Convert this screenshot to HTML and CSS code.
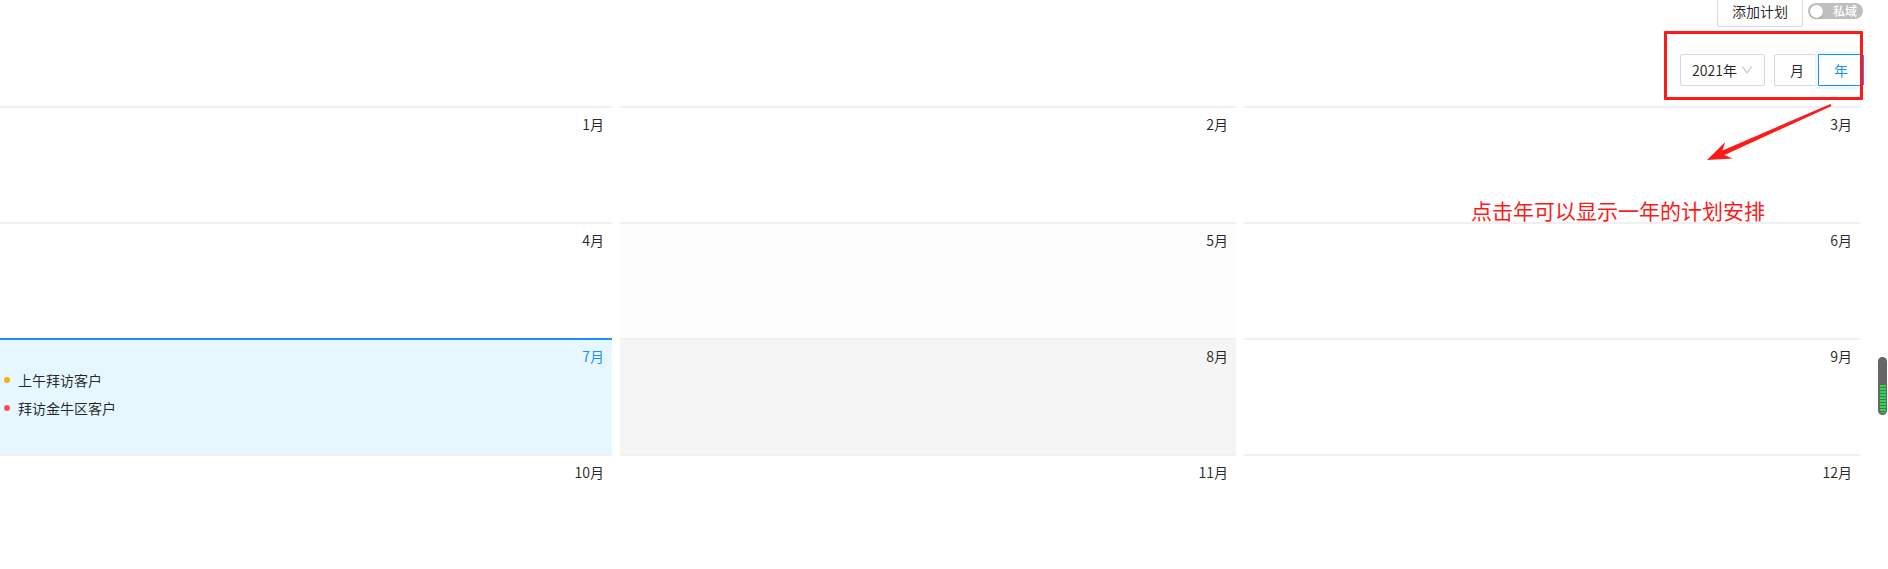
FILE: index.html
```html
<!DOCTYPE html>
<html lang="zh-CN">
<head>
<meta charset="utf-8">
<title>计划日历</title>
<link rel="stylesheet" href="styles.css">
</head>
<body>
<div class="page">
  <div class="toolbar">
    <button class="btn">添加计划</button>
    <div class="switch"><span class="switch-handle"></span><span class="switch-inner">私域</span></div>
  </div>
  <div class="controls">
    <div class="select">
      <span class="select-value">2021年</span>
      <svg class="select-arrow" viewBox="64 64 896 896" width="12" height="12"><path fill="currentColor" d="M884 256h-75c-5.1 0-9.900 2.5-12.9 6.6L512 654.2 227.9 262.6c-3-4.1-7.8-6.6-12.9-6.6h-75c-6.5 0-10.3 7.4-6.5 12.7l352.6 486.1c12.8 17.6 39 17.6 51.7 0l352.6-486.1c3.9-5.3.1-12.7-6.4-12.7z"/></svg>
    </div>
    <div class="radio-group">
      <span class="radio-btn">月</span>
      <span class="radio-btn checked">年</span>
    </div>
  </div>
  <div class="calendar">
    <div class="cell"><div class="cell-value">1月</div><div class="cell-content"></div></div>
    <div class="cell"><div class="cell-value">2月</div><div class="cell-content"></div></div>
    <div class="cell"><div class="cell-value">3月</div><div class="cell-content"></div></div>
    <div class="cell"><div class="cell-value">4月</div><div class="cell-content"></div></div>
    <div class="cell cell-fading"><div class="cell-value">5月</div><div class="cell-content"></div></div>
    <div class="cell"><div class="cell-value">6月</div><div class="cell-content"></div></div>
    <div class="cell cell-today">
      <div class="cell-value">7月</div>
      <div class="cell-content">
        <ul class="events">
          <li class="event"><span class="dot dot-warning"></span><span class="event-text">上午拜访客户</span></li>
          <li class="event"><span class="dot dot-error"></span><span class="event-text">拜访金牛区客户</span></li>
        </ul>
      </div>
    </div>
    <div class="cell cell-hover"><div class="cell-value">8月</div><div class="cell-content"></div></div>
    <div class="cell"><div class="cell-value">9月</div><div class="cell-content"></div></div>
    <div class="cell"><div class="cell-value">10月</div><div class="cell-content"></div></div>
    <div class="cell"><div class="cell-value">11月</div><div class="cell-content"></div></div>
    <div class="cell"><div class="cell-value">12月</div><div class="cell-content"></div></div>
  </div>
</div>

<div class="annot-box"></div>
<svg class="annot-arrow" width="140" height="70" viewBox="0 0 140 70">
  <polygon fill="#ff1a1a" points="7,60 32.6,58.5 24.5,55 131.6,6 130.4,4 22.5,50.4 25.2,42.1"/>
</svg>
<div class="annot-text">点击年可以显示一年的计划安排</div>
<div class="scroll-thumb"><div class="scroll-green"></div></div>
</body>
</html>
```

FILE: styles.css
```css
* { box-sizing: border-box; }
html, body {
  margin: 0;
  padding: 0;
  background: #fff;
  overflow: hidden;
}
body {
  font-family: "Noto Sans CJK SC", "Noto Sans", sans-serif;
  font-size: 14px;
  color: rgba(0, 0, 0, 0.85);
  width: 1888px;
  height: 569px;
  position: relative;
}
.page {
  width: 1864px;
  display: flex;
  flex-direction: column;
}
.toolbar {
  display: flex;
  justify-content: flex-end;
  align-items: center;
  gap: 5px;
  height: 32px;
  margin-top: -5px;
  padding-right: 1px;
}
.btn {
  height: 32px;
  padding: 0 14px;
  border: 1px solid #d9d9d9;
  border-radius: 2px;
  background: #fff;
  font-family: inherit;
  font-size: 14px;
  line-height: 30px;
  color: rgba(0, 0, 0, 0.85);
  width: 86px;
  white-space: nowrap;
  text-align: center;
}
.switch {
  position: relative;
  width: 55px;
  height: 16px;
  border-radius: 8px;
  background: #bfbfbf;
  display: flex;
  align-items: center;
}
.switch-handle {
  position: absolute;
  left: 1.5px;
  top: 1.5px;
  width: 13px;
  height: 13px;
  border-radius: 50%;
  background: #fff;
  box-shadow: 0 1px 2px rgba(0, 35, 11, 0.2);
}
.switch-inner {
  margin-left: 25px;
  font-size: 12px;
  line-height: 16px;
  color: #fff;
  font-weight: 500;
  white-space: nowrap;
}
.controls {
  display: flex;
  justify-content: flex-end;
  align-items: center;
  gap: 9px;
  margin-top: 27px;
  height: 32px;
}
.select {
  width: 85px;
  height: 32px;
  border: 1px solid #d9d9d9;
  border-radius: 2px;
  padding: 0 11px;
  display: flex;
  align-items: center;
  justify-content: space-between;
}
.select-value {
  line-height: 30px;
  white-space: nowrap;
}
.select-arrow {
  color: rgba(0, 0, 0, 0.25);
}
.radio-group {
  display: flex;
}
.radio-btn {
  height: 32px;
  padding: 0 15px;
  border: 1px solid #d9d9d9;
  line-height: 30px;
  background: #fff;
  width: 45px;
  text-align: center;
}
.radio-btn:first-child {
  border-radius: 2px 0 0 2px;
}
.radio-btn.checked {
  border-color: #1890ff;
  color: #1890ff;
  margin-left: -1px;
  width: 46px;
  border-radius: 0 2px 2px 0;
  box-shadow: 0 0 0 3px #eef7ff;
}
.calendar {
  margin-top: 20px;
  margin-left: -4px;
  width: 1864px;
  display: grid;
  grid-template-columns: repeat(3, 616px);
  column-gap: 8px;
}
.cell {
  height: 116px;
  border-top: 2px solid #f0f0f0;
  padding: 4px 8px 0;
  background: #fff;
}
.cell-fading { background: #fdfdfd; }
.cell-hover { background: #f5f5f5; }
.cell-today {
  background: #e6f7ff;
  border-top-color: #1890ff;
}
.cell-today .cell-value { color: #1890ff; }
.cell-value {
  line-height: 24px;
  height: 24px;
  text-align: right;
}
.cell-content {
  height: 86px;
}
.events {
  margin: 0;
  padding: 0;
  list-style: none;
}
.event {
  display: flex;
  align-items: center;
  height: 24px;
  margin-bottom: 4px;
}
.dot {
  width: 6px;
  height: 6px;
  border-radius: 50%;
  flex: none;
}
.dot-warning { background: #faad14; }
.dot-error { background: #ff4d4f; }
.event-text {
  margin-left: 8px;
  line-height: 24px;
}
.annot-box {
  position: absolute;
  left: 1664px;
  top: 31px;
  width: 199px;
  height: 69px;
  border: 3px solid #ff1a1a;
  border-radius: 1px;
}
.annot-arrow {
  position: absolute;
  left: 1700px;
  top: 100px;
}
.annot-text {
  position: absolute;
  left: 1471px;
  top: 198px;
  font-size: 21px;
  line-height: 24px;
  color: #ff1a1a;
  white-space: nowrap;
}
.scroll-thumb {
  position: absolute;
  left: 1878px;
  top: 357px;
  width: 9px;
  height: 58px;
  border-radius: 5px;
  background: #666;
}
.scroll-green {
  position: absolute;
  left: 1.5px;
  bottom: 2px;
  width: 6px;
  height: 28px;
  border-radius: 0 0 3px 3px;
  background: repeating-linear-gradient(to bottom, #3ccf55 0, #3ccf55 2px, #2b8a3e 2px, #2b8a3e 3px);
}
```
